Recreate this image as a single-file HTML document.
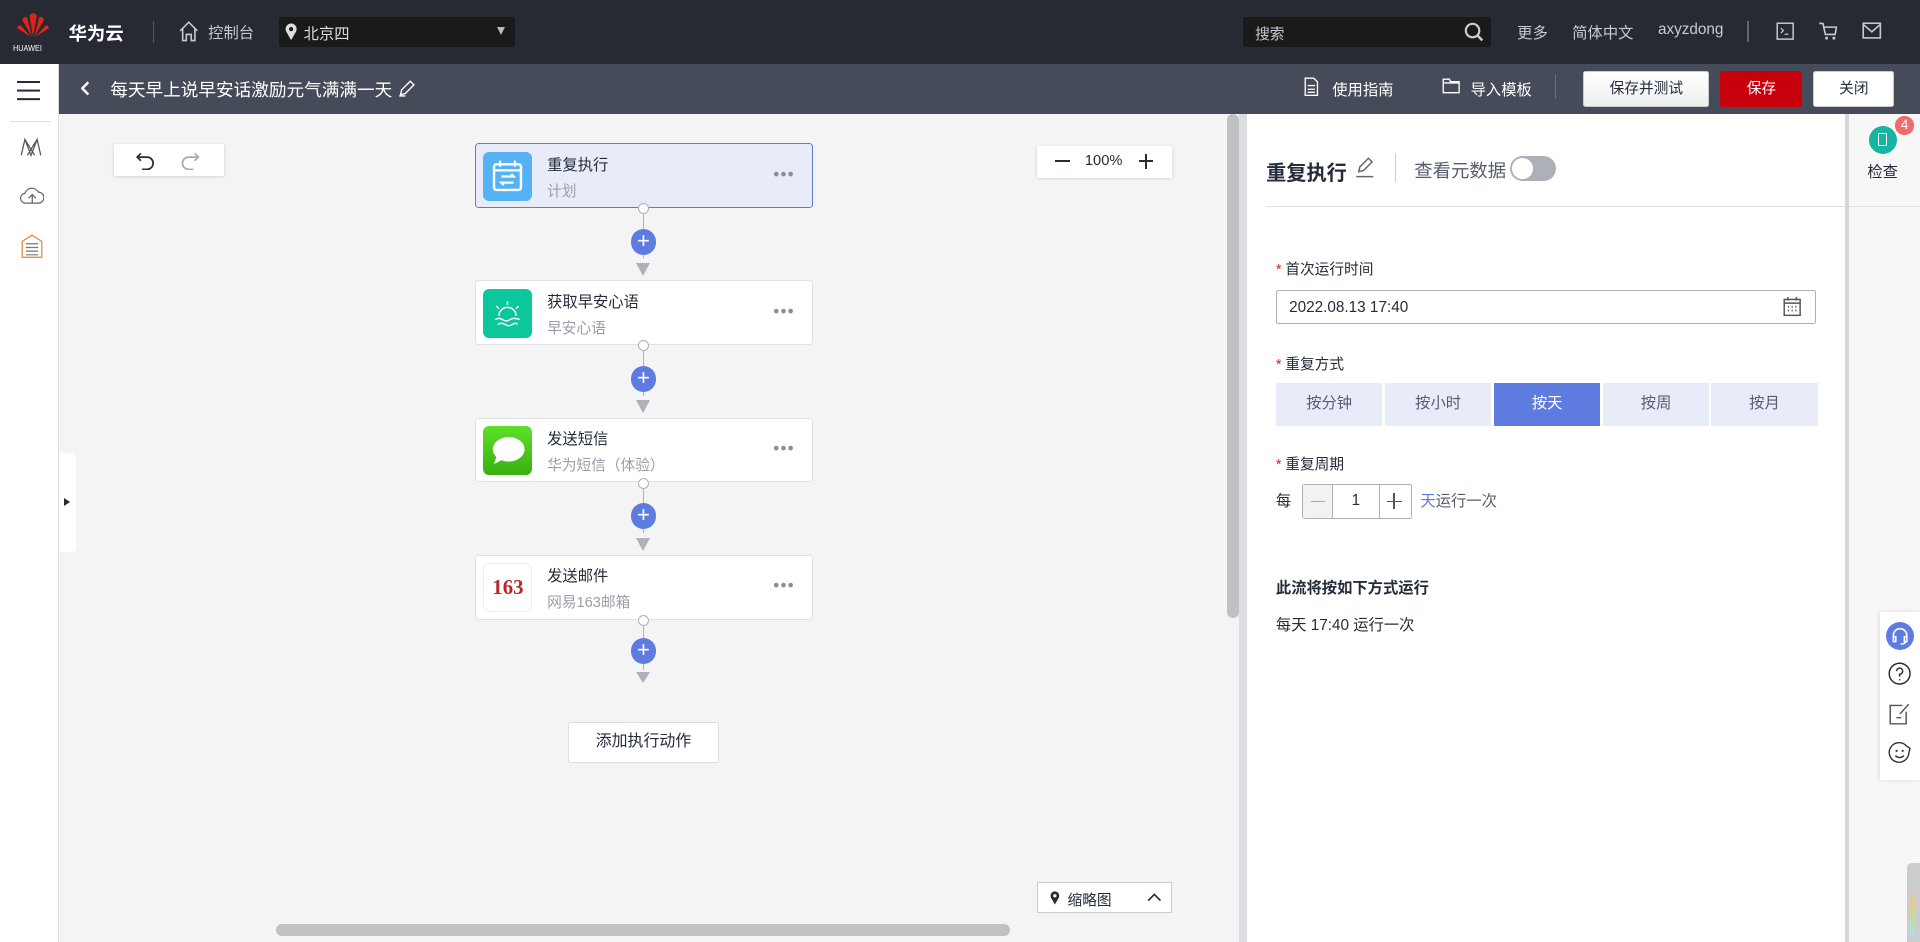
<!DOCTYPE html>
<html><head><meta charset="utf-8"><style>
*{margin:0;padding:0;box-sizing:border-box}
html,body{width:1920px;height:942px;overflow:hidden;background:#fff}
#w{zoom:1.22449;width:1568px;height:769px;position:relative;font-family:"Liberation Sans","Noto Sans CJK SC",sans-serif;font-size:12px;color:#252b3a}
.a{position:absolute}
.top{left:0;top:0;width:1568px;height:52px;background:#272a33;color:#c8cad0}
.bar{left:48px;top:52px;width:1520px;height:41px;background:#464b59;color:#fff}
.side{left:0;top:52px;width:48px;height:717px;background:#fff;border-right:1px solid #ddd}
.canvas{left:48px;top:93px;width:964px;height:676px;background:#f4f4f4}
.node{width:276px;height:53px;background:#fff;border:1px solid #dfe1e6;border-radius:3px}
.node .ic{position:absolute;left:6px;top:6px;width:40px;height:40px;border-radius:5px}
.node .t{position:absolute;left:58px;top:7px;font-size:12.5px;color:#252b3a}
.node .s{position:absolute;left:58px;top:29px;font-size:12px;color:#9a9ea8}
.node .d{position:absolute;right:14px;top:16px;color:#8a8e99;font-size:14px;letter-spacing:1px}
.dot{width:9px;height:9px;border:1px solid #aeb1b8;border-radius:50%;background:#fff}
.ln{width:1px;background:#aeb1b8}
.plus{width:21px;height:21px;border-radius:50%;background:#5e7ce0;color:#fff;text-align:center;line-height:20px;font-size:18px}
.arr{width:0;height:0;border-left:6px solid transparent;border-right:6px solid transparent;border-top:11px solid #aeb1b8}
.btn{height:29px;border:1px solid #c8cad0;background:#fff;text-align:center;line-height:27px;font-size:12px;border-radius:2px;color:#252b3a}
.lbl{font-size:12px;color:#252b3a}
.lbl b{color:#e02020;font-weight:normal;margin-right:3px}
.seg{top:313px;height:35px;width:87px;background:#e8ecf8;text-align:center;line-height:35px;font-size:12.5px;color:#575d6c}
</style></head><body><div id="w">
<div class="a top">
 <svg class="a" style="left:13px;top:9px" width="28" height="22" viewBox="0 0 28 22"><g fill="#e0251b"><path d="M14 21 L11 4 Q13 1 14 2Z"/><path d="M14 21 L17 4 Q15 1 14 2Z"/><path d="M13 21 L5 7 Q7 4 9 5Z"/><path d="M15 21 L23 7 Q21 4 19 5Z"/><path d="M12 21 L1 14 Q2 11 4 12Z"/><path d="M16 21 L27 14 Q26 11 24 12Z"/></g></svg>
 <div class="a" style="left:11px;top:35px;font-size:7px;color:#fff;transform:scaleX(.85);transform-origin:left">HUAWEI</div>
 <div class="a" style="left:56px;top:16px;font-size:15px;color:#fff;font-weight:bold">华为云</div>
 <div class="a" style="left:125px;top:17px;width:1px;height:18px;background:#555"></div>
 <svg class="a" style="left:146px;top:17px" width="16" height="17" viewBox="0 0 16 17"><path d="M1 8 L8 1 L15 8 M3 6 V16 H6 V11 H10 V16 H13 V6" fill="none" stroke="#c8cad0" stroke-width="1.3"/></svg>
 <div class="a" style="left:170px;top:17px;font-size:12.5px">控制台</div>
 <div class="a" style="left:228px;top:14px;width:193px;height:24px;background:#1a1a1a;border-radius:2px">
  <svg class="a" style="left:5px;top:5px" width="10" height="14" viewBox="0 0 10 14"><path d="M5 14 L1 7 A4.5 4.5 0 1 1 9 7Z" fill="#ddd"/><circle cx="5" cy="5" r="1.7" fill="#1a1a1a"/></svg>
  <div class="a" style="left:20px;top:4px;color:#ddd;font-size:12.5px">北京四</div>
  <div class="a" style="left:178px;top:8px;border-left:4px solid transparent;border-right:4px solid transparent;border-top:7px solid #bbb"></div>
 </div>
 <div class="a" style="left:1015px;top:14px;width:203px;height:24px;background:#1a1a1a;border-radius:2px">
  <div class="a" style="left:10px;top:5px;font-size:12px">搜索</div>
  <svg class="a" style="left:181px;top:4px" width="16" height="16" viewBox="0 0 16 16"><circle cx="7" cy="7" r="5.5" fill="none" stroke="#ccc" stroke-width="1.8"/><path d="M11 11 L15 15" stroke="#ccc" stroke-width="2"/></svg>
 </div>
 <div class="a" style="left:1239px;top:17px;font-size:12.5px">更多</div>
 <div class="a" style="left:1284px;top:17px;font-size:12.5px">简体中文</div>
 <div class="a" style="left:1354px;top:17px;font-size:12.5px">axyzdong</div>
 <div class="a" style="left:1427px;top:17px;width:1px;height:17px;background:#666"></div>
 <svg class="a" style="left:1450px;top:18px" width="15" height="15" viewBox="0 0 15 15"><rect x="1" y="1" width="13" height="13" fill="none" stroke="#c8cad0" stroke-width="1.2"/><path d="M4 5 L6 7 L4 9 M7 10 H10" fill="none" stroke="#c8cad0"/></svg>
 <svg class="a" style="left:1485px;top:17px" width="17" height="17" viewBox="0 0 17 17"><path d="M1 2 H4 L6 11 H14 L15 5 H5" fill="none" stroke="#c8cad0" stroke-width="1.3"/><circle cx="7" cy="14" r="1.2" fill="#c8cad0"/><circle cx="13" cy="14" r="1.2" fill="#c8cad0"/></svg>
 <svg class="a" style="left:1521px;top:18px" width="16" height="14" viewBox="0 0 16 14"><rect x="1" y="1" width="14" height="12" fill="none" stroke="#c8cad0" stroke-width="1.3"/><path d="M1 2 L8 8 L15 2" fill="none" stroke="#c8cad0" stroke-width="1.3"/></svg>
</div>
<div class="a side">
 <div class="a" style="left:14px;top:14px;width:19px;height:2px;background:#252b3a;box-shadow:0 7px 0 #252b3a,0 14px 0 #252b3a"></div>
 <div class="a" style="left:8px;top:47px;width:34px;height:1px;background:#ddd"></div>
 <svg class="a" style="left:16px;top:60px" width="18" height="16" viewBox="0 0 18 16"><path d="M1 15 L4 2 L9 15 L14 2 L17 15 M4 2 L12 15 M14 2 L6 15" fill="none" stroke="#555" stroke-width="1"/></svg>
 <svg class="a" style="left:16px;top:100px" width="20" height="16" viewBox="0 0 20 16"><path d="M5 14 A4 4 0 0 1 4 6 A6 6 0 0 1 15 5 A4.5 4.5 0 0 1 15 14Z M10 14 V8 M7 10 L10 7 L13 10" fill="none" stroke="#666" stroke-width="1"/></svg>
 <svg class="a" style="left:17px;top:139px" width="18" height="20" viewBox="0 0 18 20"><path d="M1 6 L9 1 L17 6 V19 H1Z" fill="none" stroke="#d98a3a" stroke-width="1"/><path d="M4 8 H14 M4 11 H14 M4 14 H14 M4 17 H14" stroke="#777"/></svg>
</div>
<div class="a bar">
 <svg class="a" style="left:18px;top:14px" width="8" height="12" viewBox="0 0 8 12"><path d="M6 1 L1 6 L6 11" fill="none" stroke="#fff" stroke-width="2"/></svg>
 <div class="a" style="left:42px;top:11px;font-size:14.4px;white-space:nowrap">每天早上说早安话激励元气满满一天</div>
 <svg class="a" style="left:277px;top:13px" width="14" height="14" viewBox="0 0 14 14"><path d="M2 12 L3 8 L10 1 L13 4 L6 11Z M1 13 H6" fill="none" stroke="#fff" stroke-width="1.1"/></svg>
 <svg class="a" style="left:1017px;top:11px" width="12" height="16" viewBox="0 0 12 16"><path d="M1 1 H8 L11 4 V15 H1Z M3 7 H9 M3 10 H9 M3 12.5 H9" fill="none" stroke="#fff" stroke-width="1.1"/></svg>
 <div class="a" style="left:1040px;top:12px;font-size:12.5px">使用指南</div>
 <svg class="a" style="left:1130px;top:12px" width="15" height="13" viewBox="0 0 15 13"><path d="M1 1 H6 L7 3 H14 V12 H1Z M1 4 H14" fill="none" stroke="#fff" stroke-width="1.1"/></svg>
 <div class="a" style="left:1153px;top:12px;font-size:12.5px">导入模板</div>
 <div class="a" style="left:1222px;top:9px;width:1px;height:20px;background:#6b7080"></div>
 <div class="a btn" style="left:1245px;top:6px;width:103px;background:linear-gradient(#fff,#eee);line-height:29px">保存并测试</div>
 <div class="a btn" style="left:1357px;top:6px;width:67px;background:#c7000b;border-color:#c7000b;color:#fff;line-height:29px">保存</div>
 <div class="a btn" style="left:1433px;top:6px;width:66px;line-height:29px">关闭</div>
</div>
<div class="a canvas">
 <div class="a" style="left:45px;top:25px;width:90px;height:26px;background:#fff;box-shadow:0 1px 3px rgba(0,0,0,.15)">
  <svg class="a" style="left:18px;top:5px" width="16" height="16" viewBox="0 0 16 16"><path d="M4 2 L1 5 L4 8 M1 5 H9 A5 5 0 0 1 9 15 H5" fill="none" stroke="#252b3a" stroke-width="1.4"/></svg>
  <svg class="a" style="left:54px;top:5px" width="16" height="16" viewBox="0 0 16 16"><path d="M12 2 L15 5 L12 8 M15 5 H7 A5 5 0 0 0 7 15 H11" fill="none" stroke="#aaa" stroke-width="1.4"/></svg>
 </div>
 <div class="a" style="left:799px;top:26px;width:110px;height:26px;background:#fff;box-shadow:0 1px 3px rgba(0,0,0,.15)">
  <div class="a" style="left:15px;top:12px;width:12px;height:1.5px;background:#252b3a"></div>
  <div class="a" style="left:39px;top:6px;font-size:12px">100%</div>
  <div class="a" style="left:83px;top:12px;width:12px;height:1.5px;background:#252b3a"></div>
  <div class="a" style="left:88px;top:7px;width:1.5px;height:12px;background:#252b3a"></div>
 </div>
 <div class="a node" style="left:340px;top:24px;background:#e8ecf8;border-color:#5b7bd5">
  <div class="ic" style="background:#55b2f5"><svg width="40" height="40" viewBox="0 0 40 40"><rect x="9" y="10" width="22" height="21" rx="2" fill="none" stroke="#fff" stroke-width="2"/><path d="M14 7 V12 M26 7 V12 M9 15 H31 M15 20 H25 L23 18 M25 25 H15 L17 27" fill="none" stroke="#fff" stroke-width="1.8"/></svg></div>
  <div class="t">重复执行</div><div class="s">计划</div><div class="d">•••</div></div>
 <div class="a node" style="left:340px;top:136px">
  <div class="ic" style="background:#0cc69c"><svg width="40" height="40" viewBox="0 0 40 40"><path d="M13 22 A7 7 0 0 1 27 22 M20 10 V13 M11 14 L13 16 M29 14 L27 16 M10 25 Q13 23 16 25 T22 25 T30 25 M12 29 Q15 27 18 29 T24 29 T28 29" fill="none" stroke="#fff" stroke-width="1.2"/></svg></div>
  <div class="t">获取早安心语</div><div class="s">早安心语</div><div class="d">•••</div></div>
 <div class="a node" style="left:340px;top:248px">
  <div class="ic" style="background:linear-gradient(#5ee02a,#38b010)"><svg width="40" height="40" viewBox="0 0 40 40"><ellipse cx="21" cy="19" rx="13" ry="10" fill="#fff"/><path d="M11 25 L9 31 L17 27Z" fill="#fff"/></svg></div>
  <div class="t">发送短信</div><div class="s">华为短信（体验）</div><div class="d">•••</div></div>
 <div class="a node" style="left:340px;top:360px">
  <div class="ic" style="background:#fff;border:1px solid #eee;color:#b8282a;font-family:'Liberation Serif',serif;font-weight:bold;font-size:17px;text-align:center;line-height:38px">163</div>
  <div class="t">发送邮件</div><div class="s">网易163邮箱</div><div class="d">•••</div></div>
 <div class="a dot" style="left:473px;top:73px"></div><div class="a ln" style="left:477px;top:82px;height:36px"></div><div class="a plus" style="left:467px;top:94px">+</div><div class="a arr" style="left:471px;top:122px"></div>
 <div class="a dot" style="left:473px;top:185px"></div><div class="a ln" style="left:477px;top:194px;height:36px"></div><div class="a plus" style="left:467px;top:206px">+</div><div class="a arr" style="left:471px;top:234px"></div>
 <div class="a dot" style="left:473px;top:297px"></div><div class="a ln" style="left:477px;top:306px;height:36px"></div><div class="a plus" style="left:467px;top:318px">+</div><div class="a arr" style="left:471px;top:346px"></div>
 <div class="a dot" style="left:473px;top:409px"></div><div class="a ln" style="left:477px;top:418px;height:36px"></div><div class="a plus" style="left:467px;top:428px">+</div><div class="a arr" style="left:471px;top:456px;border-top-width:9px"></div>
 <div class="a btn" style="left:416px;top:497px;width:123px;height:33px;line-height:31px;font-size:13px;border-color:#ddd">添加执行动作</div>
 <div class="a" style="left:799px;top:627px;width:110px;height:26px;background:#fff;border:1px solid #ccc">
  <svg class="a" style="left:10px;top:7px" width="8" height="11" viewBox="0 0 10 14"><path d="M5 14 L1 7 A4.5 4.5 0 1 1 9 7Z" fill="#252b3a"/><circle cx="5" cy="5" r="1.7" fill="#fff"/></svg>
  <div class="a" style="left:24px;top:5px;font-size:12px">缩略图</div>
  <svg class="a" style="left:89px;top:8px" width="12" height="8" viewBox="0 0 12 8"><path d="M1 7 L6 2 L11 7" fill="none" stroke="#252b3a" stroke-width="1.4"/></svg>
 </div>
 <div class="a" style="left:0;top:277px;width:14px;height:81px;background:#fff;border-radius:0 4px 4px 0"><div class="a" style="left:4px;top:37px;border-top:4px solid transparent;border-bottom:4px solid transparent;border-left:5px solid #252b3a"></div></div>
 <div class="a" style="left:177px;top:662px;width:600px;height:9px;background:#c1c1c1;border-radius:5px"></div>
 <div class="a" style="left:954px;top:0;width:10px;height:412px;background:#c1c1c1;border-radius:5px"></div>
</div>
<div class="a" style="left:1012px;top:93px;width:6px;height:676px;background:#dcdde0"></div>
<div class="a" style="left:1018px;top:93px;width:489px;height:676px;background:#fff">
 <div class="a" style="left:16px;top:35px;font-size:16.5px;font-weight:bold">重复执行</div>
 <svg class="a" style="left:89px;top:35px" width="16" height="17" viewBox="0 0 16 17"><path d="M3 12 L4 8 L11 1 L14 4 L7 11Z M1 16 H15" fill="none" stroke="#666" stroke-width="1.2"/></svg>
 <div class="a" style="left:121px;top:32px;width:1px;height:24px;background:#ccc"></div>
 <div class="a" style="left:137px;top:35px;font-size:15px;color:#575d6c">查看元数据</div>
 <div class="a" style="left:215px;top:34px;width:38px;height:21px;border-radius:11px;background:#adb0b8"><div class="a" style="left:2px;top:2px;width:17px;height:17px;border-radius:50%;background:#fff"></div></div>
 <div class="a" style="left:16px;top:75px;width:473px;height:1px;background:#dfe1e6"></div>
 <div class="a lbl" style="left:24px;top:118px"><b>*</b>首次运行时间</div>
 <div class="a" style="left:24px;top:144px;width:441px;height:28px;border:1px solid #adb0b8;border-radius:2px">
  <div class="a" style="left:10px;top:6px;font-size:12.5px">2022.08.13 17:40</div>
  <svg class="a" style="left:413px;top:5px" width="15" height="16" viewBox="0 0 15 16"><rect x="1" y="2" width="13" height="13" fill="none" stroke="#555" stroke-width="1.2"/><path d="M4 0 V3 M11 0 V3 M1 5 H14" stroke="#555" stroke-width="1.2"/><path d="M4 8 H5 M7 8 H8 M10 8 H11 M4 11 H5 M7 11 H8 M10 11 H11" stroke="#555" stroke-width="1.4"/></svg>
 </div>
 <div class="a lbl" style="left:24px;top:195px"><b>*</b>重复方式</div>
 <div class="a seg" style="left:24px;top:220px">按分钟</div>
 <div class="a seg" style="left:113px;top:220px">按小时</div>
 <div class="a seg" style="left:202px;top:220px;background:#5e7ce0;color:#fff">按天</div>
 <div class="a seg" style="left:291px;top:220px">按周</div>
 <div class="a seg" style="left:379px;top:220px;width:88px">按月</div>
 <div class="a lbl" style="left:24px;top:277px"><b>*</b>重复周期</div>
 <div class="a" style="left:24px;top:306px;font-size:12.5px">每</div>
 <div class="a" style="left:45px;top:302px;width:90px;height:29px;border:1px solid #adb0b8;border-radius:2px">
  <div class="a" style="left:0;top:0;width:25px;height:27px;background:#f2f2f2;border-right:1px solid #adb0b8"></div>
  <div class="a" style="left:7px;top:13px;width:11px;height:1.5px;background:#aaa"></div>
  <div class="a" style="left:40px;top:6px;font-size:12.5px">1</div>
  <div class="a" style="left:62px;top:0;width:1px;height:27px;background:#adb0b8"></div>
  <div class="a" style="left:69px;top:13px;width:12px;height:1.5px;background:#555"></div>
  <div class="a" style="left:74px;top:7px;width:1.5px;height:13px;background:#555"></div>
 </div>
 <div class="a" style="left:142px;top:306px;font-size:12.5px;color:#575d6c"><span style="color:#5e7ce0">天</span>运行一次</div>
 <div class="a" style="left:24px;top:377px;font-size:12.5px;font-weight:bold">此流将按如下方式运行</div>
 <div class="a" style="left:24px;top:408px;font-size:12.5px">每天 17:40 运行一次</div>
</div>
<div class="a" style="left:1507px;top:93px;width:3px;height:676px;background:#d5d6da"></div>
<div class="a" style="left:1510px;top:93px;width:58px;height:676px;background:#f7f7f7">
 <div class="a" style="left:0;top:75px;width:58px;height:1px;background:#dfe1e6"></div>
 <div class="a" style="left:16px;top:10px;width:23px;height:23px;border-radius:50%;background:#17b3a3"><div class="a" style="left:8px;top:6px;width:7px;height:10px;border:1px solid #fff;border-radius:1px"></div></div>
 <div class="a" style="left:38px;top:2px;width:15px;height:15px;border-radius:50%;background:#f06a6a;color:#fff;font-size:11px;text-align:center;line-height:15px">4</div>
 <div class="a" style="left:15px;top:38px;font-size:12.5px">检查</div>
</div>
<div class="a" style="left:1535px;top:500px;width:33px;height:137px;background:#fff;box-shadow:-1px 0 4px rgba(0,0,0,.1)">
 <div class="a" style="left:5px;top:8px;width:23px;height:23px;border-radius:50%;background:#5e7ce0"><svg width="23" height="23" viewBox="0 0 23 23"><path d="M6 14 V11 A5.5 5.5 0 0 1 17 11 V14 M6 12 H8 V16 H6Z M15 12 H17 V16 H15Z M16 16 Q16 18 12 18" fill="none" stroke="#fff" stroke-width="1.3"/></svg></div>
 <svg class="a" style="left:7px;top:41px" width="19" height="19" viewBox="0 0 19 19"><circle cx="9.5" cy="9.5" r="8.5" fill="none" stroke="#252b3a" stroke-width="1.2"/><path d="M7 7.5 A2.5 2.5 0 1 1 9.5 10 V12 M9.5 14 V15" fill="none" stroke="#252b3a" stroke-width="1.2"/></svg>
 <svg class="a" style="left:8px;top:74px" width="17" height="18" viewBox="0 0 17 18"><path d="M11 2 H1 V17 H14 V7 M6 12 H10 M9 9 L16 1" fill="none" stroke="#555" stroke-width="1.2"/></svg>
 <svg class="a" style="left:7px;top:105px" width="19" height="19" viewBox="0 0 19 19"><path d="M17 10 A8 8 0 1 1 15 4 L18 6 Z" fill="none" stroke="#252b3a" stroke-width="1.1"/><circle cx="7" cy="8" r=".9" fill="#252b3a"/><circle cx="12" cy="8" r=".9" fill="#252b3a"/><path d="M6 12 Q9.5 15 13 12" fill="none" stroke="#252b3a" stroke-width="1.1"/></svg>
</div>
<div class="a" style="left:1557px;top:705px;width:11px;height:64px;background:#ccc;border-radius:4px 0 0 0"><div class="a" style="left:3px;top:20px;width:4px;height:40px;background:linear-gradient(#ccc,#e8c890,#b8e0b0,#b8d8e8)"></div></div>
</div></body></html>
